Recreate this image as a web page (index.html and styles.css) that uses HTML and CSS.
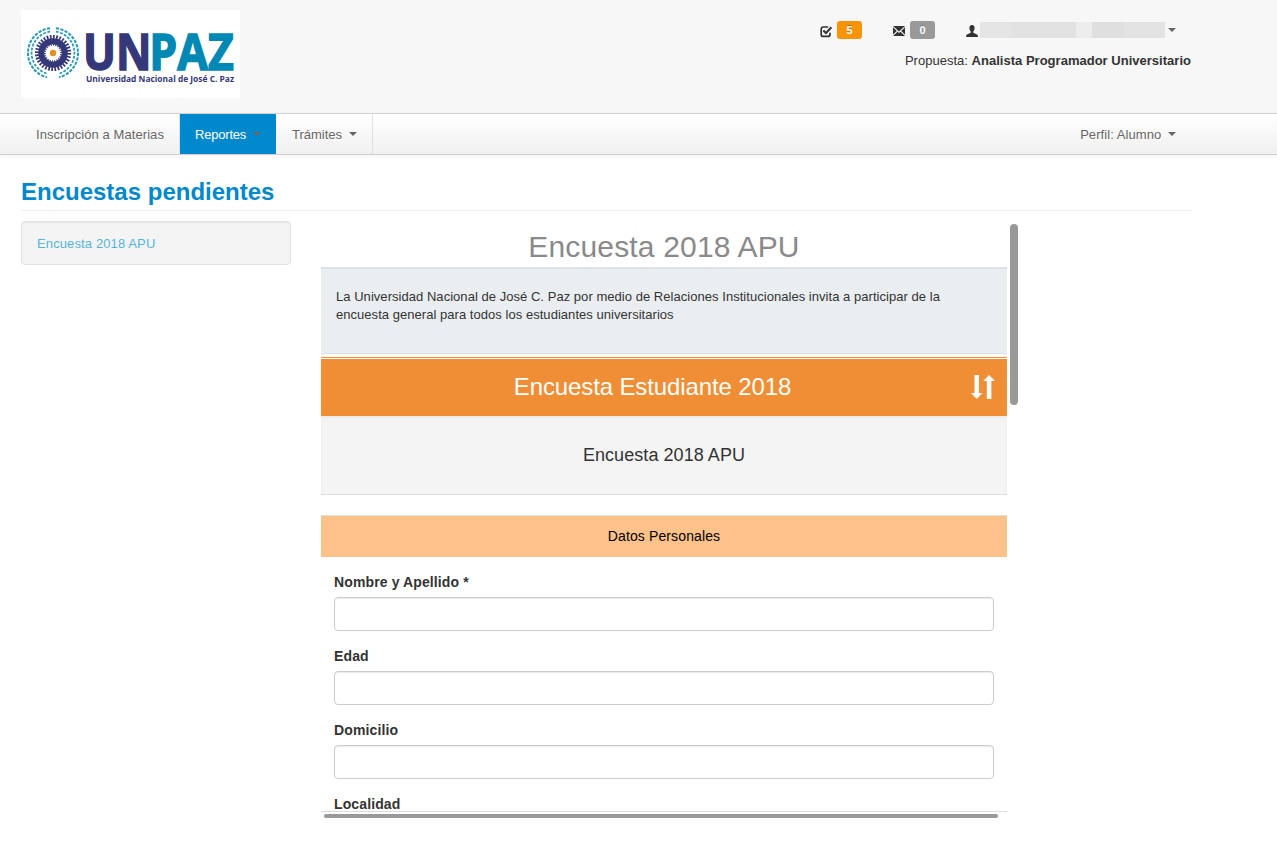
FILE: index.html
```html
<!DOCTYPE html>
<html lang="es">
<head>
<meta charset="utf-8">
<title>Encuestas pendientes</title>
<link rel="stylesheet" href="styles.css">
</head>
<body>
<header class="header">
  <svg class="logo" viewBox="0 0 219 88" width="219" height="88">
    <rect width="219" height="88" fill="#fff"/>
    <g fill="none" stroke="#2799b8" stroke-width="2">
      <g stroke-dasharray="3.2 1.3">
        <path d="M29 18.2A25 25 0 0 0 26 67.3"/>
        <path d="M35 18.2A25 25 0 0 1 38 67.3"/>
      </g>
      <g stroke-dasharray="2.8 1.4" stroke-width="1.7">
        <path d="M29 21.7A21.5 21.5 0 0 0 26 63.6"/>
        <path d="M35 21.7A21.5 21.5 0 0 1 38 63.6"/>
      </g>
    </g>
    <circle cx="32" cy="43" r="16" fill="none" stroke="#353878" stroke-width="4.2" pathLength="64" stroke-dasharray="1.1 0.9"/>
    <circle cx="32" cy="43" r="14.8" fill="#353878"/>
    <circle cx="32" cy="43" r="7.4" fill="#fff"/>
    <circle cx="32" cy="43" r="7.8" fill="none" stroke="#fff" stroke-width="1.8" pathLength="44" stroke-dasharray="1 1"/>
    <circle cx="32" cy="43" r="3.2" fill="#dd9220"/>
    <text class="logo-name navy" x="62" y="59.8" textLength="68.5" lengthAdjust="spacingAndGlyphs">UN</text>
    <text class="logo-name teal" x="128.2" y="59.8" textLength="84.5" lengthAdjust="spacingAndGlyphs">PAZ</text>
    <text class="logo-sub" x="65" y="72" textLength="148" lengthAdjust="spacingAndGlyphs">Universidad Nacional de José C. Paz</text>
  </svg>
  <div class="account">
    <div class="account-row">
      <span class="notice">
        <svg class="icon-check" width="13" height="13" viewBox="0 0 13 13"><path d="M8.2 2H3.2A2 2 0 0 0 1.2 4V9.4A2 2 0 0 0 3.2 11.4H8A2 2 0 0 0 10 9.4V7.8" fill="none" stroke="#333" stroke-width="1.7"/><path d="M3.3 5.6L6 8.1L11.3 2.3" fill="none" stroke="#333" stroke-width="2.1"/></svg>
        <span class="badge badge-warning">5</span>
      </span>
      <span class="notice">
        <svg width="12" height="10" viewBox="0 0 12 10"><path d="M0 0H12L6 5.4ZM0 1.3L3.8 5L0 8.6ZM12 1.3V8.6L8.2 5ZM0 10L4.6 5.7L6 7L7.4 5.7L12 10Z" fill="#333"/></svg>
        <span class="badge">0</span>
      </span>
      <span class="user">
        <svg width="12" height="12" viewBox="0 0 12 12"><path d="M6 0C7.8 0 8.8 1.3 8.6 3.3C8.5 5 7.6 5.9 7.3 6.5V7.8L11 9.4Q12 9.9 12 12H0Q0 9.9 1 9.4L4.7 7.8V6.5C4.4 5.9 3.5 5 3.4 3.3C3.2 1.3 4.2 0 6 0Z" fill="#333"/></svg>
        <span class="user-name"></span>
        <span class="caret"></span>
      </span>
    </div>
    <div class="proposal">Propuesta: <strong>Analista Programador Universitario</strong></div>
  </div>
</header>
<nav class="navbar">
  <a class="nav-item enroll">Inscripción a Materias</a>
  <a class="nav-item active">Reportes <span class="caret"></span></a>
  <a class="nav-item procedures">Trámites <span class="caret"></span></a>
  <a class="nav-item profile">Perfil: Alumno <span class="caret"></span></a>
</nav>
<main class="content">
  <h1 class="page-title">Encuestas pendientes</h1>
  <div class="columns">
    <aside class="well"><a>Encuesta 2018 APU</a></aside>
    <div class="frame">
      <section class="survey">
        <h2 class="survey-title">Encuesta 2018 APU</h2>
        <p class="intro">La Universidad Nacional de José C. Paz por medio de Relaciones Institucionales invita a participar de la encuesta general para todos los estudiantes universitarios</p>
        <div class="bar">
          <span>Encuesta Estudiante 2018</span>
          <svg width="24" height="24" viewBox="0 0 24 24" fill="#fff"><path d="M3.5 0H8V18H11.5L5.8 24L0 18H3.5ZM15.8 24V6H12.3L18.1 0L24 6H20.4V24Z"/></svg>
        </div>
        <div class="subtitle">Encuesta 2018 APU</div>
        <div class="group">Datos Personales</div>
        <form class="fields">
          <label class="field">Nombre y Apellido *<input type="text"></label>
          <label class="field">Edad<input type="text"></label>
          <label class="field">Domicilio<input type="text"></label>
          <label class="field">Localidad<input type="text"></label>
        </form>
      </section>
      <div class="scroll-y"></div>
      <div class="scroll-x"></div>
    </div>
  </div>
</main>
</body>
</html>
```
FILE: styles.css
```css
* { box-sizing: border-box; }
body { margin: 0; height: 846px; overflow: hidden; background: #fff; color: #333; font: 13px/18px "Liberation Sans", Arial, sans-serif; }
.header { display: flex; justify-content: space-between; height: 113px; padding: 10px 86px 0 21px; background: #f7f7f7; }
.logo { display: block; overflow: visible; }
.logo-name { font: 700 50px "Open Sans", sans-serif; stroke-width: 1.5px; }
.navy { fill: #353878; stroke: #353878; }
.teal { fill: #0088b4; stroke: #0088b4; }
.logo-sub { font: 700 8px "Open Sans", sans-serif; fill: #353878; }
.account { display: flex; flex-direction: column; align-items: flex-end; padding-top: 11px; }
.account-row { display: flex; height: 18px; padding-right: 15px; }
.notice, .user { display: flex; align-items: center; }
.notice { margin-right: 31px; }
.notice svg { margin: 2px 5px 0 0; }
.notice .icon-check { margin: 2px 4px 0 0; }
.user svg { margin: 2px 2px 0 0; }
.badge { width: 25px; height: 18px; border-radius: 3px; background: #999; color: #fff; font-size: 11px; font-weight: 700; text-align: center; text-shadow: 0 -1px 0 rgba(0,0,0,.25); }
.badge-warning { background: #f89406; }
.user-name { width: 185px; height: 16px; background: linear-gradient(90deg, #e5e5e5 0 32px, #e2e2e2 32px 96px, #ededed 96px 112px, #dfdfdf 112px 144px, #e3e3e3 144px); }
.caret { display: inline-block; border: 4px solid transparent; border-top-color: #666; border-bottom: 0; margin-left: 3px; vertical-align: 3px; }
.proposal { margin-top: 13px; letter-spacing: .015px; }
.navbar { display: flex; height: 42px; padding: 0 86px 0 21px; border-top: 1px solid #d4d4d4; border-bottom: 1px solid #d0d0d0; background: linear-gradient(#fff, #f0f0f0); box-shadow: 0 1px 4px rgba(0,0,0,.06); }
.nav-item { padding: 12px 15px 10px; border-right: 1px solid #e0e0e0; color: #666; white-space: nowrap; text-shadow: 0 1px 0 #fff; }
.nav-item.enroll { width: 159px; letter-spacing: .07px; }
.nav-item.active { width: 96px; background: #0088cc; border: 0; color: #fff; text-shadow: none; letter-spacing: -.2px; }
.nav-item.procedures { padding-left: 16px; }
.nav-item.profile { margin-left: auto; border: 0; letter-spacing: .07px; }
.content { width: 1191px; padding-left: 21px; }
.page-title { height: 56px; margin: 0 0 10px; padding-top: 19px; border-bottom: 1px solid #eee; color: #0088cc; font-size: 24px; line-height: 36px; }
.columns { display: flex; gap: 30px; align-items: flex-start; }
.well { width: 270px; height: 44px; padding: 13px 15px; border: 1px solid #e3e3e3; border-radius: 4px; background: #f4f4f4; box-shadow: inset 0 1px 1px rgba(0,0,0,.05); color: #56b4d8; letter-spacing: .12px; }
.frame { display: grid; grid-template-columns: 686px 8px; grid-template-rows: 591px 4px; gap: 2px 3px; }
.survey { overflow: hidden; border-bottom: 1px solid #ddd; }
.survey-title { height: 46px; margin: 0; padding-top: 6px; color: #8a8a8a; font-size: 30px; font-weight: 400; line-height: 40px; letter-spacing: .17px; text-align: center; }
.intro { height: 87px; margin: 0 0 3px; padding: 19px 15px 0; border-top: 2px solid #dfe2e4; border-bottom: 1px solid #dcdfe2; background: #eaeef1; letter-spacing: .04px; }
.bar { display: flex; align-items: center; height: 59px; padding: 0 12px 0 0; border-top: 1px solid #ef8e35; background: linear-gradient(#fff 1px, #ef8e35 1px); color: #fff; font-size: 24px; line-height: 30px; letter-spacing: -.12px; }
.bar span { flex: 1; text-align: center; padding-left: 13px; }
.subtitle { height: 79px; margin-bottom: 20px; border-bottom: 1px solid #ddd; background: #f4f4f4; box-shadow: inset 0 2px 2px #e9eaec; font-size: 18px; line-height: 79px; letter-spacing: .06px; text-align: center; }
.group { height: 42px; border-top: 1px solid #dedfd8; background: #ffc28b; color: #000; font-size: 14px; line-height: 41px; letter-spacing: .12px; text-align: center; }
.fields { padding: 15px 13px 0; }
.field { display: block; height: 74px; font-size: 14px; font-weight: 700; line-height: 20px; letter-spacing: .12px; }
.field input { display: block; width: 100%; height: 34px; margin: 5px 0 0; border: 1px solid #ccc; border-radius: 4px; box-shadow: inset 0 1px 1px rgba(0,0,0,.075); background: #fff; }
.scroll-y { height: 181px; margin-top: 3px; border-radius: 4px; background: #999; }
.scroll-x { width: 674px; margin-left: 3px; border-radius: 2px; background: #999; }
```
